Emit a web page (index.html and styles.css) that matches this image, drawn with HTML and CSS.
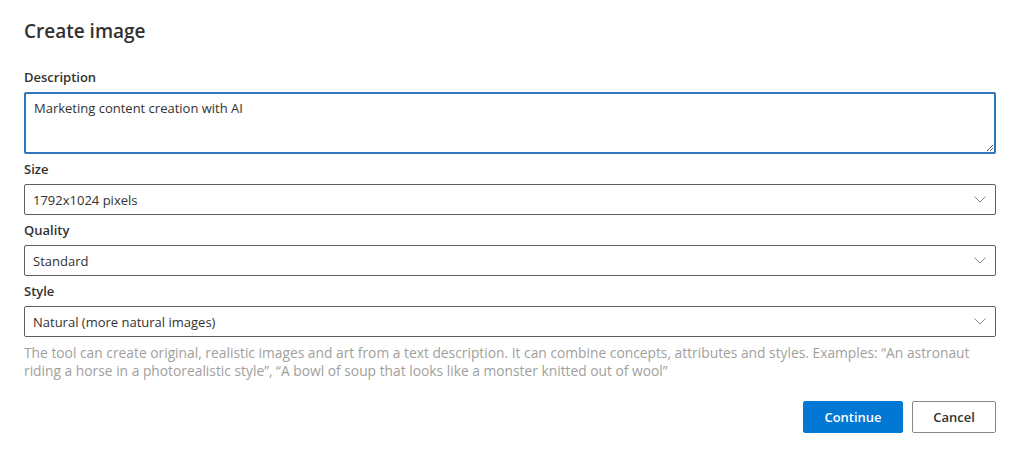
FILE: index.html
```html
<!DOCTYPE html>
<html lang="en">
<head>
<meta charset="utf-8">
<title>Create image</title>
<link rel="stylesheet" href="styles.css">
</head>
<body>
<div class="dialog">
  <h1 class="title">Create image</h1>
  <div class="field">
    <label class="label">Description</label>
    <div class="textarea">Marketing content creation with AI
      <svg class="grip" width="8" height="8" viewBox="0 0 8 8"><path d="M7 1 L1 7 M7 4 L4 7" stroke="#555" stroke-width="1" fill="none"/></svg>
    </div>
  </div>
  <div class="field">
    <label class="label">Size</label>
    <div class="select"><span>1792x1024 pixels</span>
      <svg class="chev" width="12" height="7" viewBox="0 0 12 7"><path d="M0.5 0.5 L6 6 L11.5 0.5" stroke="#8a8886" stroke-width="1" fill="none"/></svg>
    </div>
  </div>
  <div class="field">
    <label class="label">Quality</label>
    <div class="select"><span>Standard</span>
      <svg class="chev" width="12" height="7" viewBox="0 0 12 7"><path d="M0.5 0.5 L6 6 L11.5 0.5" stroke="#8a8886" stroke-width="1" fill="none"/></svg>
    </div>
  </div>
  <div class="field">
    <label class="label">Style</label>
    <div class="select"><span>Natural (more natural images)</span>
      <svg class="chev" width="12" height="7" viewBox="0 0 12 7"><path d="M0.5 0.5 L6 6 L11.5 0.5" stroke="#8a8886" stroke-width="1" fill="none"/></svg>
    </div>
  </div>
  <p class="help">The tool can create original, realistic images and art from a text description. It can combine concepts, attributes and styles. Examples: “An astronaut riding a horse in a photorealistic style”, “A bowl of soup that looks like a monster knitted out of wool”</p>
  <div class="actions">
    <button class="btn primary">Continue</button>
    <button class="btn">Cancel</button>
  </div>
</div>
</body>
</html>
```
FILE: styles.css
```css
* { box-sizing: border-box; }
body {
  margin: 0;
  background: #ffffff;
  font-family: "Open Sans", "Noto Sans", sans-serif;
  color: #323130;
}
.dialog {
  width: 1020px;
  padding: 18px 24px 0 24px;
}
.title {
  margin: 0 0 23px 0;
  font-size: 19px;
  line-height: 26px;
  font-weight: 600;
  color: #323130;
}
.field {
  display: flex;
  flex-direction: column;
}
.label {
  font-size: 13px;
  line-height: 20px;
  font-weight: 600;
  margin: 0 0 5px 0;
  color: #323130;
}
.textarea {
  position: relative;
  height: 62px;
  border: 2px solid #2f75b9;
  border-radius: 2px;
  padding: 4px 8px;
  font-size: 13px;
  line-height: 20px;
  margin-bottom: 5px;
}
.grip {
  position: absolute;
  right: 0;
  bottom: 0;
}
.select {
  height: 31px;
  border: 1px solid #605e5c;
  border-radius: 2px;
  padding: 0 9px 0 8px;
  display: flex;
  align-items: center;
  justify-content: space-between;
  font-size: 13px;
  margin-bottom: 5px;
}
.help {
  margin: 2px 0 0 0;
  font-size: 13.8px;
  line-height: 18px;
  color: #a19f9d;
}
.actions {
  display: flex;
  justify-content: flex-end;
  gap: 9px;
  margin-top: 21px;
}
.btn {
  height: 32px;
  padding: 0 20px;
  font-family: inherit;
  font-size: 13px;
  font-weight: 600;
  border: 1px solid #8a8886;
  border-radius: 2px;
  background: #ffffff;
  color: #323130;
}
.btn.primary {
  background: #0078d4;
  border-color: #0078d4;
  color: #ffffff;
  width: 100px;
}
.btn:last-child { width: 84px; }
```
